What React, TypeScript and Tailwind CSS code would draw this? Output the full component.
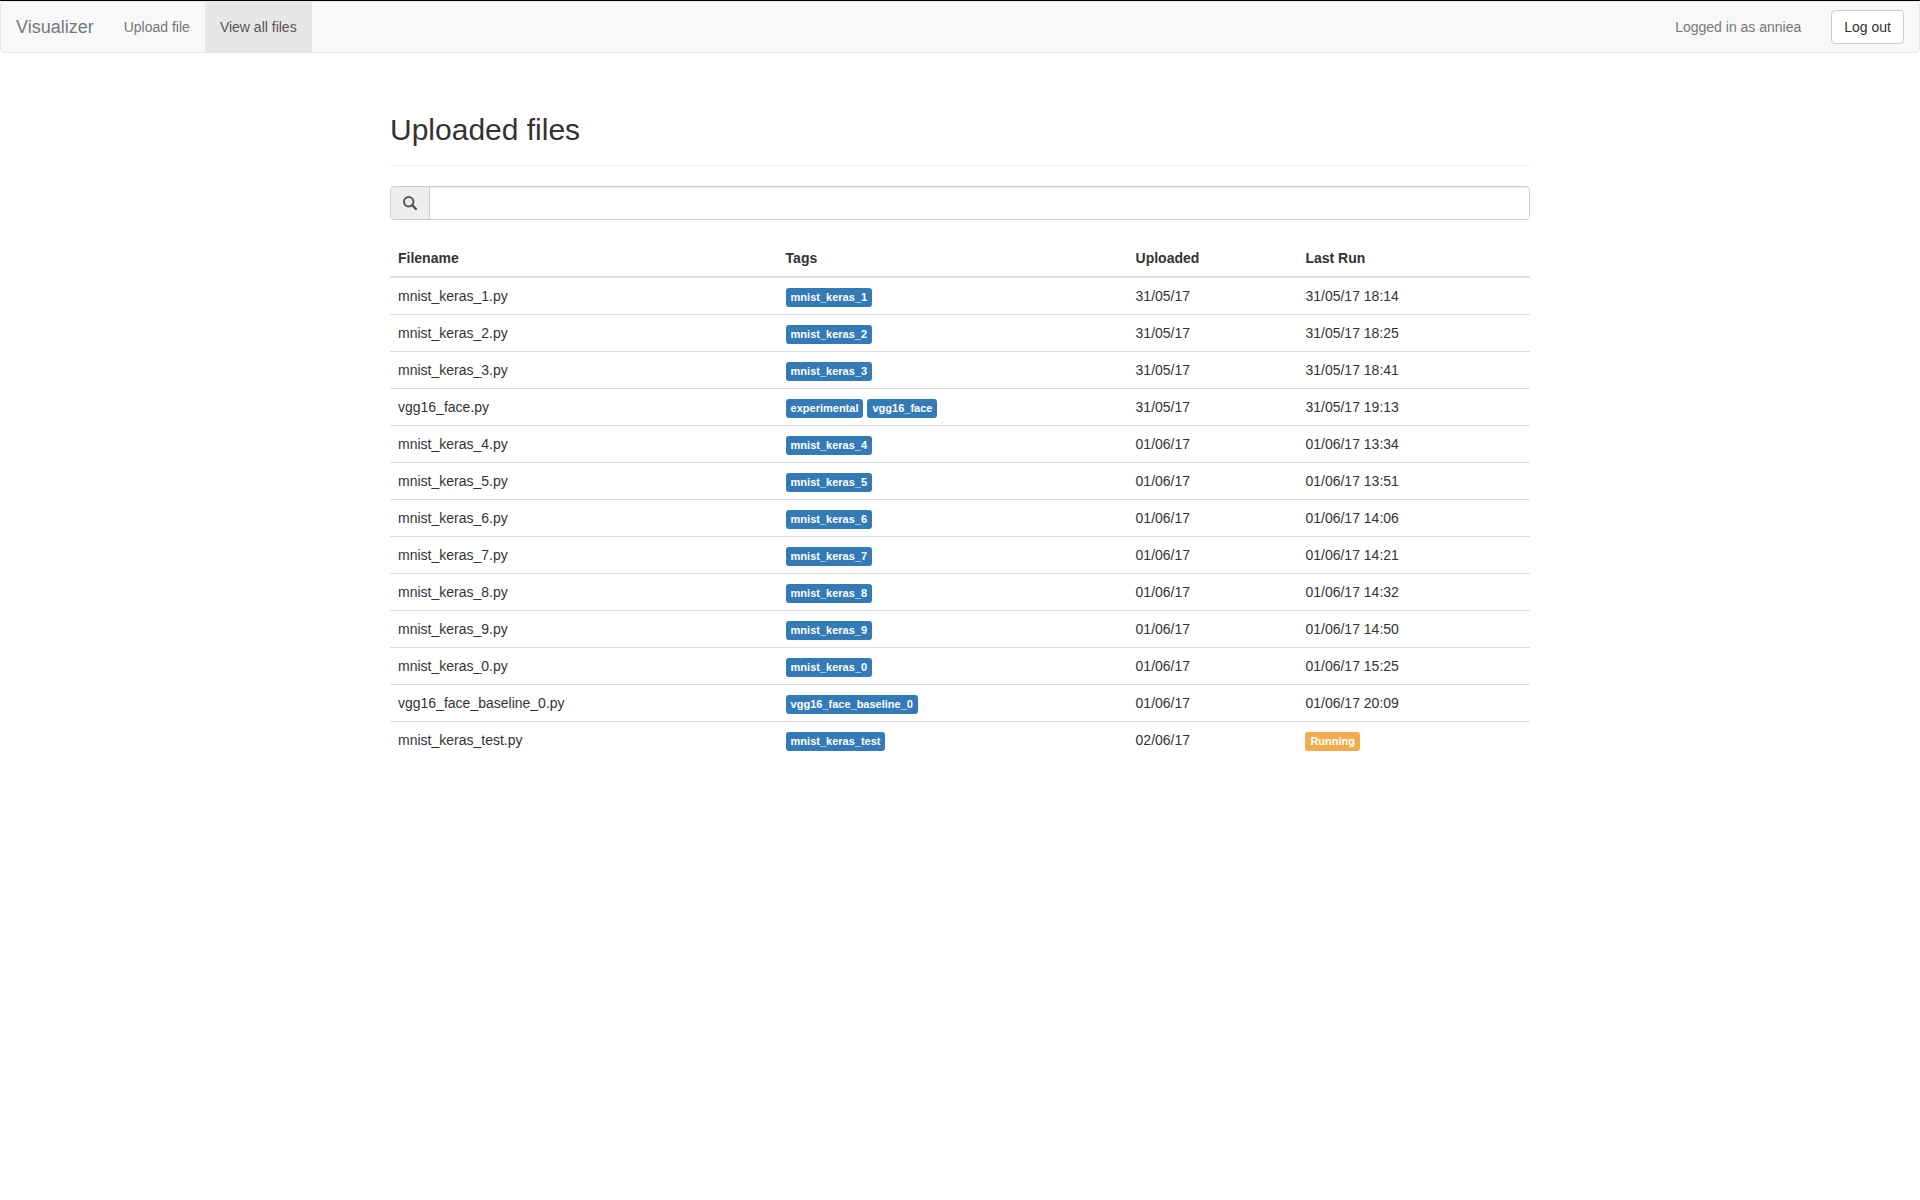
type FileRow = {
  name: string;
  tags: string[];
  uploaded: string;
  lastRun: string | null;
};

const files: FileRow[] = [
  { name: "mnist_keras_1.py", tags: ["mnist_keras_1"], uploaded: "31/05/17", lastRun: "31/05/17 18:14" },
  { name: "mnist_keras_2.py", tags: ["mnist_keras_2"], uploaded: "31/05/17", lastRun: "31/05/17 18:25" },
  { name: "mnist_keras_3.py", tags: ["mnist_keras_3"], uploaded: "31/05/17", lastRun: "31/05/17 18:41" },
  { name: "vgg16_face.py", tags: ["experimental", "vgg16_face"], uploaded: "31/05/17", lastRun: "31/05/17 19:13" },
  { name: "mnist_keras_4.py", tags: ["mnist_keras_4"], uploaded: "01/06/17", lastRun: "01/06/17 13:34" },
  { name: "mnist_keras_5.py", tags: ["mnist_keras_5"], uploaded: "01/06/17", lastRun: "01/06/17 13:51" },
  { name: "mnist_keras_6.py", tags: ["mnist_keras_6"], uploaded: "01/06/17", lastRun: "01/06/17 14:06" },
  { name: "mnist_keras_7.py", tags: ["mnist_keras_7"], uploaded: "01/06/17", lastRun: "01/06/17 14:21" },
  { name: "mnist_keras_8.py", tags: ["mnist_keras_8"], uploaded: "01/06/17", lastRun: "01/06/17 14:32" },
  { name: "mnist_keras_9.py", tags: ["mnist_keras_9"], uploaded: "01/06/17", lastRun: "01/06/17 14:50" },
  { name: "mnist_keras_0.py", tags: ["mnist_keras_0"], uploaded: "01/06/17", lastRun: "01/06/17 15:25" },
  { name: "vgg16_face_baseline_0.py", tags: ["vgg16_face_baseline_0"], uploaded: "01/06/17", lastRun: "01/06/17 20:09" },
  { name: "mnist_keras_test.py", tags: ["mnist_keras_test"], uploaded: "02/06/17", lastRun: null },
];

function Tag({ text, color }: { text: string; color: string }) {
  return (
    <span className={`mr-1 rounded-[3px] px-[5px] pt-[3px] pb-1 text-[11px] leading-none font-bold whitespace-nowrap text-white ${color}`}>
      {text}
    </span>
  );
}

function SearchIcon() {
  return (
    <svg className="size-[14px]" viewBox="0 0 14 14" fill="none" stroke="currentColor" aria-hidden="true">
      <circle cx="5.7" cy="5.7" r="4.7" strokeWidth="2" />
      <path d="M9.2 9.2 L12.8 12.8" strokeWidth="2.4" strokeLinecap="round" />
    </svg>
  );
}

function Navbar() {
  return (
    <nav className="flex items-stretch rounded border border-[#e7e7e7] bg-[#f8f8f8] pr-[15px] text-[#777]">
      <a href="#" className="p-[15px] text-lg leading-5">Visualizer</a>
      <a href="#" className="p-[15px]">Upload file</a>
      <a href="#" aria-current="page" className="bg-[#e7e7e7] p-[15px] text-[#555]">View all files</a>
      <p className="ml-auto p-[15px]">Logged in as anniea</p>
      <button type="button" className="ml-[15px] self-center rounded border border-[#ccc] bg-white px-3 py-1.5 text-[#333]">
        Log out
      </button>
    </nav>
  );
}

export default function App() {
  return (
    <div className="min-h-screen border-t border-black bg-white font-['Liberation_Sans',Arial,sans-serif] text-sm leading-5 text-[#333]">
      <Navbar />
      <main className="mx-auto mt-[60px] max-w-[1140px]">
        <h1 className="border-b border-[#eee] pb-[19px] text-3xl leading-[33px] font-medium">Uploaded files</h1>
        <div className="mt-5 flex h-[34px] rounded border border-[#ccc]">
          <label htmlFor="search" className="flex items-center rounded-l-[3px] border-r border-[#ccc] bg-[#eee] px-3 text-[#555]">
            <SearchIcon />
          </label>
          <input
            id="search"
            type="text"
            aria-label="Search files"
            className="min-w-0 flex-1 rounded-r-[3px] bg-white px-3 text-[#555] shadow-[inset_0_1px_1px_rgba(0,0,0,0.075)] outline-none"
          />
        </div>
        <table className="mt-5 w-full table-fixed border-separate border-spacing-0 text-left">
          <colgroup>
            <col className="w-[34%]" />
            <col className="w-[30.7%]" />
            <col className="w-[14.9%]" />
            <col />
          </colgroup>
          <thead>
            <tr className="*:border-b-2 *:border-[#ddd] *:p-2 *:font-bold">
              <th scope="col">Filename</th>
              <th scope="col">Tags</th>
              <th scope="col">Uploaded</th>
              <th scope="col">Last Run</th>
            </tr>
          </thead>
          <tbody>
            {files.map((file) => (
              <tr key={file.name} className="*:border-t *:border-[#ddd] *:p-2 first:*:border-t-0">
                <td>{file.name}</td>
                <td>
                  {file.tags.map((tag) => (
                    <Tag key={tag} text={tag} color="bg-[#337ab7]" />
                  ))}
                </td>
                <td>{file.uploaded}</td>
                <td>{file.lastRun ?? <Tag text="Running" color="bg-[#f0ad4e]" />}</td>
              </tr>
            ))}
          </tbody>
        </table>
      </main>
    </div>
  );
}
